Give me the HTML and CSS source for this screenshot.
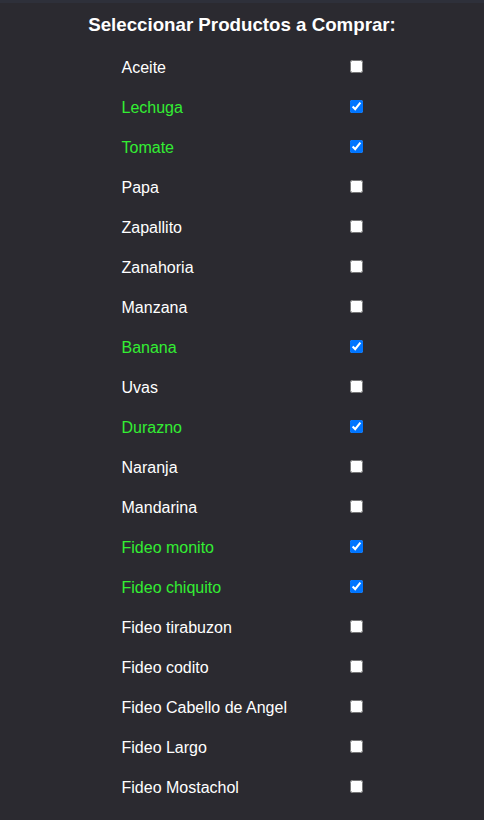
FILE: index.html
```html
<!DOCTYPE html>
<html lang="es">
<head>
<meta charset="utf-8">
<link rel="stylesheet" href="styles.css">
</head>
<body>
<div class="page">
  <h1 class="title">Seleccionar Productos a Comprar:</h1>
  <div class="list">
    <label class="row"><span class="name">Aceite</span><input type="checkbox"></label>
    <label class="row on"><span class="name">Lechuga</span><input type="checkbox" checked></label>
    <label class="row on"><span class="name">Tomate</span><input type="checkbox" checked></label>
    <label class="row"><span class="name">Papa</span><input type="checkbox"></label>
    <label class="row"><span class="name">Zapallito</span><input type="checkbox"></label>
    <label class="row"><span class="name">Zanahoria</span><input type="checkbox"></label>
    <label class="row"><span class="name">Manzana</span><input type="checkbox"></label>
    <label class="row on"><span class="name">Banana</span><input type="checkbox" checked></label>
    <label class="row"><span class="name">Uvas</span><input type="checkbox"></label>
    <label class="row on"><span class="name">Durazno</span><input type="checkbox" checked></label>
    <label class="row"><span class="name">Naranja</span><input type="checkbox"></label>
    <label class="row"><span class="name">Mandarina</span><input type="checkbox"></label>
    <label class="row on"><span class="name">Fideo monito</span><input type="checkbox" checked></label>
    <label class="row on"><span class="name">Fideo chiquito</span><input type="checkbox" checked></label>
    <label class="row"><span class="name">Fideo tirabuzon</span><input type="checkbox"></label>
    <label class="row"><span class="name">Fideo codito</span><input type="checkbox"></label>
    <label class="row"><span class="name">Fideo Cabello de Angel</span><input type="checkbox"></label>
    <label class="row"><span class="name">Fideo Largo</span><input type="checkbox"></label>
    <label class="row"><span class="name">Fideo Mostachol</span><input type="checkbox"></label>
  </div>
</div>
</body>
</html>
```

FILE: styles.css
```css
html, body {
  margin: 0;
  padding: 0;
  background: #2b2a30;
}
body {
  font-family: "Liberation Sans", Arial, sans-serif;
  color: #ffffff;
  border-top: 3px solid #2e303a;
}
.page {
  display: flex;
  flex-direction: column;
  align-items: center;
}
.title {
  margin: 11px 0 0;
  font-size: 18.72px;
  font-weight: bold;
  line-height: 21px;
  text-align: center;
}
.list {
  margin-top: 13px;
  width: 240px;
  padding-left: 1px;
  display: flex;
  flex-direction: column;
}
.row {
  height: 40px;
  display: flex;
  align-items: center;
  justify-content: space-between;
  font-size: 16px;
}
.row .name {
  margin-left: -1px;
}
.row input {
  margin: 0 0 3px 0;
  width: 13px;
  height: 13px;
}
.row.on .name {
  color: #3e3;
}
```
